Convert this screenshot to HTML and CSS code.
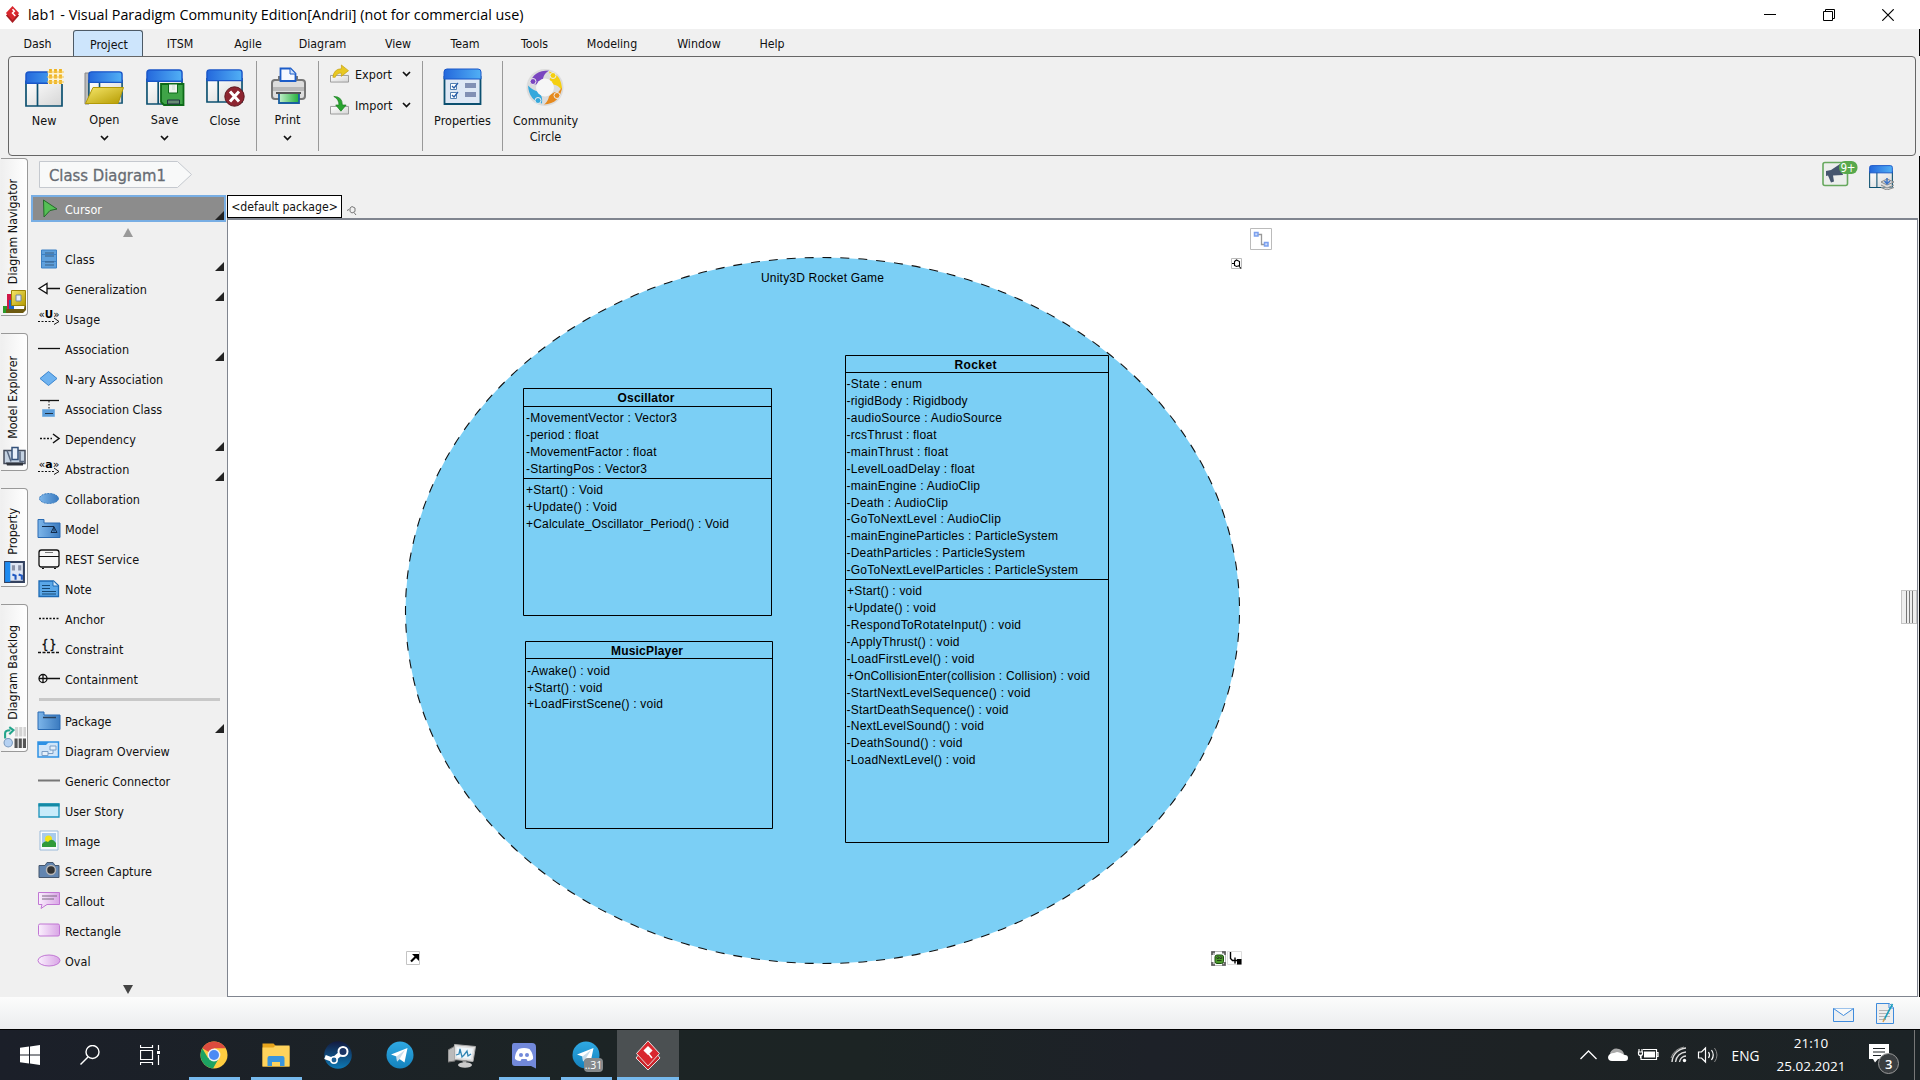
FILE: index.html
```html
<!DOCTYPE html>
<html lang="en">
<head>
<meta charset="utf-8">
<title>lab1 - Visual Paradigm Community Edition</title>
<link rel="stylesheet" href="styles.css">
</head>
<body>
<svg class="defs" width="0" height="0">
  <defs>
    <linearGradient id="gBlue" x1="0" y1="0" x2="1" y2="0"><stop offset="0" stop-color="#7db6ea"/><stop offset="1" stop-color="#3a7abf"/></linearGradient>
    <linearGradient id="gHead" x1="0" y1="0" x2="1" y2="0"><stop offset="0" stop-color="#2468dc"/><stop offset="1" stop-color="#51b0f5"/></linearGradient>
    <linearGradient id="gPane" x1="0" y1="0" x2="1" y2="1"><stop offset="0" stop-color="#fff"/><stop offset="1" stop-color="#d5d5d5"/></linearGradient>
    <linearGradient id="gGold" x1="0" y1="0" x2="1" y2="1"><stop offset="0" stop-color="#f6e76a"/><stop offset="1" stop-color="#b49a00"/></linearGradient>
    <linearGradient id="gGreen" x1="0" y1="0" x2="1" y2="0"><stop offset="0" stop-color="#c3efcb"/><stop offset="1" stop-color="#22b03a"/></linearGradient>
    <linearGradient id="gPink" x1="0" y1="0" x2="1" y2="0"><stop offset="0" stop-color="#faf0fd"/><stop offset="1" stop-color="#d9a5e6"/></linearGradient>
    <linearGradient id="gTele" x1="0" y1="0" x2="0" y2="1"><stop offset="0" stop-color="#2fa9e3"/><stop offset="1" stop-color="#1482bd"/></linearGradient>
    <linearGradient id="gSteam" x1="0" y1="0" x2="0" y2="1"><stop offset="0" stop-color="#131a3f"/><stop offset="1" stop-color="#0d79b5"/></linearGradient>
    <symbol id="window" viewBox="0 0 38 38" preserveAspectRatio="none">
      <path d="M1 11h36v26H1z" fill="url(#gPane)" stroke="#0c5070" stroke-width="1.700"/>
      <path d="M12.500 12v25" stroke="#0c5070" stroke-width="1.700"/>
      <path d="M1 13V4q0-3 3-3h30q3 0 3 3v9z" fill="url(#gHead)" stroke="#1a56c8" stroke-width="1.500"/>
    </symbol>
    <symbol id="down" viewBox="0 0 9 6"><path d="M1 1l3.500 3.500L8 1" fill="none" stroke="#111" stroke-width="1.700"/></symbol>
    <symbol id="tele" viewBox="0 0 28 28">
      <circle cx="14" cy="14" r="13.500" fill="url(#gTele)"/>
      <path d="M5 13.500L21.500 7 18.500 21.500 13.500 18l-2.500 2.500-.5-5z" fill="#fff"/><path d="M10.500 15.500L19 9l-5.500 9-2.500 2.500z" fill="#c8dcea"/>
    </symbol>
    <symbol id="corner" viewBox="0 0 9 9"><path d="M9 0v9H0z" fill="#222"/></symbol>
    <symbol id="pin" viewBox="0 0 11 11"><path d="M1 5.500l2-1M4 3l2-1.500 3 1.500v3.500l-3 1.500-2-1.500zM8 7.500l2 2.500" fill="none" stroke="currentColor" stroke-width="1"/></symbol>
  </defs>
</svg>

<div class="app">
  <header class="titlebar">
    <svg class="applogo" viewBox="0 0 16 18"><path d="M8 3l7 7-7 8-7-8z" fill="#a91d22"/><path d="M8 0l7 7.500L8 15 1 7.500z" fill="#d9272e"/><path d="M8 3.500l2 2-2 2 3 3" fill="none" stroke="#fff" stroke-width="1.600"/></svg>
    <span class="title">lab1 - Visual Paradigm Community Edition[Andrii] (not for commercial use)</span>
    <div class="winbtns">
      <svg viewBox="0 0 12 12"><path d="M0 5.500h12" stroke="#000"/></svg>
      <svg viewBox="0 0 12 12"><path d="M.5 2.500h9v9h-9zM2.500 2.500v-2h9v9h-2" fill="none" stroke="#000"/></svg>
      <svg viewBox="0 0 12 12"><path d="M.3.300l11.400 11.400M11.700.300L.3 11.700" stroke="#000" stroke-width="1.200"/></svg>
    </div>
  </header>

  <nav class="menu">
    <span class="m1">Dash</span><span class="m2 active">Project</span><span class="m3">ITSM</span><span class="m4">Agile</span><span class="m5">Diagram</span><span class="m6">View</span><span class="m7">Team</span><span class="m8">Tools</span><span class="m9">Modeling</span><span class="m10">Window</span><span class="m11">Help</span>
  </nav>

  <section class="ribbon">
    <div class="group files">
      <div class="tool plain">
        <svg viewBox="0 0 40 40"><use href="#window" x="1" y="4" width="38" height="36"/><path d="M24 3h15v14H24z" fill="#fdf3d2"/><path d="M26.500 2v16M31.500 2v16M36.500 2v16" stroke="#eeb21c" stroke-width="2.800" stroke-dasharray="4 1.500"/><path d="M23 5h17M23 10h17M23 15h17" stroke="#f3c552" stroke-width="1.200"/></svg>
        <span>New</span>
      </div>
      <div class="tool">
        <svg viewBox="0 0 40 40"><path d="M1 6h4v31H1z" fill="#bbb" stroke="#888"/><use href="#window" x="4" y="4" width="35" height="33"/><path d="M9 20.500h30.500L34 36.500H1.500z" fill="url(#gGold)" stroke="#b39a07"/></svg>
        <span>Open</span><svg class="dn"><use href="#down"/></svg>
      </div>
      <div class="tool">
        <svg viewBox="0 0 40 40"><use href="#window" x="1" y="2" width="37" height="36"/><path d="M16 17h22.500v21H19l-3-3z" fill="#3fa447" stroke="#0d6a18" stroke-width="1.800"/><path d="M23.500 17h9v9h-9z" fill="#eef5ee" stroke="#0d6a18"/><path d="M27 18h3v5h-3z" fill="#dce8dc"/><path d="M22.500 33h12v4h-12z" fill="#688a74" stroke="#234"/></svg>
        <span>Save</span><svg class="dn"><use href="#down"/></svg>
      </div>
      <div class="tool plain">
        <svg viewBox="0 0 40 40"><use href="#window" x="1" y="2" width="37" height="34"/><circle cx="29.500" cy="29.500" r="9.700" fill="#8d2430" stroke="#5d161e"/><path d="M25 24.500l9 10M34 24.500l-9 10" stroke="#fff" stroke-width="3"/></svg>
        <span>Close</span>
      </div>
    </div>
    <div class="group print">
      <div class="tool">
        <svg viewBox="0 0 40 40"><path d="M6 14h28v-2h-4v-3h-20v3H6z" fill="#777"/><rect x="4" y="13" width="33" height="19" rx="3" fill="#ddd" stroke="#777" stroke-width="2"/><path d="M12.500 14V1.500h10l5 5V14z" fill="#f5f9ff" stroke="#1c5cc8" stroke-width="1.800"/><path d="M22 1.500v5.500h5.500" fill="#cfe2fb" stroke="#1c5cc8"/><path d="M5 20h31v4H5z" fill="#b9b9b9"/><path d="M11 26h20v10H11z" fill="url(#gGreen)" stroke="#1a5fa0" stroke-width="1.800"/><path d="M8 26h25" stroke="#555" stroke-width="2"/></svg>
        <span>Print</span><svg class="dn"><use href="#down"/></svg>
      </div>
    </div>
    <div class="group port">
      <div class="line"><svg class="pi" viewBox="0 0 20 20"><path d="M.5 11.500h19v7H.5z" fill="url(#gPane)" stroke="#999"/><path d="M3 13.500Q4 4.500 12 4.500V.5l7.500 6-7.500 6V9Q7 9 5.500 13.500z" fill="#e8c822" stroke="#c29f10" stroke-width=".7"/></svg><span>Export</span><svg class="dn"><use href="#down"/></svg></div>
      <div class="line imp"><svg class="pi" viewBox="0 0 20 20"><path d="M.5 11.500h19v8H.5z" fill="url(#gPane)" stroke="#999"/><path d="M4 1Q13 1 13 10h4l-5.500 6.500L6 10h3.500Q9.500 4 4 1z" fill="#2aa630" stroke="#127818" stroke-width=".7"/></svg><span>Import</span><svg class="dn"><use href="#down"/></svg></div>
    </div>
    <div class="group props">
      <div class="tool plain">
        <svg viewBox="0 0 40 40"><path d="M1.500 10h36v27h-36z" fill="#dfe8f5" stroke="#0c5070" stroke-width="1.800"/><path d="M1 12V5q0-3 3-3h31q3 0 3 3v7z" fill="url(#gHead)" stroke="#1a56c8"/><path d="M7.500 16.500h6v6h-6zM7.500 25.500h6v6h-6z" fill="#fff" stroke="#5580b0"/><path d="M9 19l2 2 4-5M9 28l2 2 4-5" fill="none" stroke="#2a5ea8" stroke-width="1.300"/><path d="M22 16h11v5H22zM22 25h11v5H22z" fill="#8290b4"/></svg>
        <span>Properties</span>
      </div>
    </div>
    <div class="group comm">
      <div class="tool plain">
        <svg viewBox="0 0 40 40"><circle cx="19" cy="20.500" r="18.500" fill="#dcdcdc"/><g transform="translate(-1 .5)"><path d="M5 16Q8 3 24 3q-5 3-6 8-3 6-8 6z" fill="#7a45c0"/><path d="M24 4q13 3 13 19-4-6-9-6-5-4-2-8z" fill="#f5cf10"/><path d="M37 20q-2 16-18 17 4-3 5-8 5-6 9-4z" fill="#e68a1e"/><path d="M3 18q5 5 10 6 5 4 4 12Q4 33 3 18z" fill="#35a8dc"/><circle cx="20" cy="20" r="9" fill="#f6f6f6"/><g stroke="#eee"><circle cx="8" cy="14" r="3" fill="#7a45c0"/><circle cx="28" cy="8" r="3" fill="#f5cf10"/><circle cx="32" cy="28" r="3" fill="#e68a1e"/><circle cx="13" cy="33" r="3" fill="#35a8dc"/></g></g></svg>
        <span>Community<br>Circle</span>
      </div>
    </div>
  </section>

  <main class="work">
    <aside class="tabs">
      <div class="vtab t1"><span>Diagram Navigator</span><svg viewBox="0 0 23 23"><path d="M0 16h8v7H0z" fill="#2a9a2a"/><path d="M4 4h7v16H4z" fill="#d01848"/><path d="M6 10h5v11H6z" fill="#1b65c4"/><path d="M3 19h18l2-14v15l-3 3H3z" fill="#6d5a10"/><path d="M8.500.5h14v15h-14z" fill="url(#gGold)" stroke="#9b8306"/><path d="M13 5h5v6h-5z" fill="#e5edf6" stroke="#7688a0"/></svg></div>
      <div class="vtab t2"><span>Model Explorer</span><svg viewBox="0 0 23 20"><path d="M1 4h21v13H1z" fill="#c4d2e2" stroke="#454c5b" stroke-width="1.500"/><path d="M3 16h17v3H4z" fill="#30353e"/><path d="M9 1h6v12H9z" fill="#e8f0fa" stroke="#34517a" stroke-width="1.500"/><path d="M4 4l4 11M17 5v10h4" stroke="#596880" stroke-width="1.500" fill="none"/></svg></div>
      <div class="vtab t3"><span>Property</span><svg viewBox="0 0 20 22"><path d="M1 1h18v19H1z" fill="#dfe6f4" stroke="#33415f" stroke-width="2"/><path d="M1 1h5v19H1z" fill="#1e8bf0"/><path d="M9 4v5M15 4v5" stroke="#8b93a8" stroke-width="3"/><path d="M8 13l3 1v4M14 13l3 1v4" stroke="#1f57c0" stroke-width="2" fill="none"/></svg></div>
      <div class="vtab t4"><span>Diagram Backlog</span><svg viewBox="0 0 22 22"><path d="M2 12V7q0-3 5-3M6 1l4 3-4 4" fill="none" stroke="#23a58c" stroke-width="2"/><circle cx="5" cy="16" r="4" fill="#b5d1f2" stroke="#7797bc"/><path d="M13 1v9M17 1v9M21 1v9" stroke="#d3d3d3" stroke-width="3"/><path d="M12.500 12v9M16.500 12v9M20.500 12v9" stroke="#555" stroke-width="3"/></svg></div>
    </aside>

    <div class="center">
      <div class="crumbbar">
        <svg class="crumb" viewBox="0 0 154 27"><path d="M.5.500h138L152.500 13.500 138.500 26.500H.5z" fill="#f8f9f9" stroke="#c5c9cf"/></svg>
        <span class="crumbtext">Class Diagram1</span>
        <svg class="mega" viewBox="0 0 36 26"><rect x="1" y="1.500" width="24.500" height="23" rx="2" fill="#eceeec" stroke="#67a85e" stroke-width="1.600"/><path d="M4 10l5-1 9-6 3 11-10 .5 1 6-3 1-3-7-2 .5z" fill="#46566e"/><rect x="17" y="0" width="18.500" height="13" rx="6" fill="#58a94c"/><text x="18.500" y="10.500" font-size="11.500" fill="#fff" textLength="15">9+</text></svg>
        <svg class="layout" viewBox="0 0 26 25"><use href="#window" x="0" y="0" width="24" height="23"/><path d="M12 17l6-3 7 3-7 3zM12 20l6 3 7-3M12 22.500l6 2.500 7-2.500" fill="#ddd" stroke="#8a8a8a"/><path d="M18 13v5M15.500 16l2.500 3 3-3" stroke="#3d73c8" stroke-width="1.500" fill="none"/></svg>
      </div>
      <div class="body">
        <div class="palette">
          <div class="row cursor"><svg viewBox="0 0 24 24"><path d="M6.500 3l13.500 9-7 1.500-6 6.500z" fill="#55bf55" stroke="#246b2a"/></svg><span>Cursor</span><svg class="more"><use href="#corner"/></svg></div>
          <div class="arrow up"></div>
          <div class="row"><svg viewBox="0 0 24 24"><path d="M4.500 3h15v18h-15z" fill="#5fa0dc" stroke="#3c80c4"/><path d="M5 7.500h14M5 14.500h14" stroke="#3c80c4"/><path d="M8 6h9M8 9h9M8 15h9M8 18h9" stroke="#3b5f83"/></svg><span>Class</span><svg class="more"><use href="#corner"/></svg></div>
          <div class="row"><svg viewBox="0 0 24 24"><path d="M2 11.500l8-5v10zM10 11.500h13" fill="#fff" stroke="#111" stroke-width="1.300"/></svg><span>Generalization</span><svg class="more"><use href="#corner"/></svg></div>
          <div class="row"><svg viewBox="0 0 24 24"><text x="1.500" y="11" font-size="11" textLength="21" lengthAdjust="spacingAndGlyphs">«<tspan font-weight="bold">U</tspan>»</text><path d="M1 14.500h17" stroke="#111" stroke-dasharray="2 1.500"/><path d="M17 11l5 3.500-5 3" fill="none" stroke="#111"/></svg><span>Usage</span></div>
          <div class="row"><svg viewBox="0 0 24 24"><path d="M1 11.500h22" stroke="#111" stroke-width="1.300"/></svg><span>Association</span><svg class="more"><use href="#corner"/></svg></div>
          <div class="row"><svg viewBox="0 0 24 24"><path d="M3 11.500l8.500-7 8.500 7-8.500 7z" fill="#6fb3f0" stroke="#3a85cf"/></svg><span>N-ary Association</span></div>
          <div class="row"><svg viewBox="0 0 24 24"><path d="M3 3.500h19" stroke="#111" stroke-width="1.300"/><path d="M12 4v8" stroke="#111" stroke-dasharray="1.500 1.500"/><path d="M5.500 12.500h12v7h-12z" fill="#5b9edc" stroke="#7eb2e0"/><path d="M8 16.500h8" stroke="#234"/></svg><span>Association Class</span></div>
          <div class="row"><svg viewBox="0 0 24 24"><path d="M3 11.500h12" stroke="#111" stroke-width="1.300" stroke-dasharray="2 1.500"/><path d="M16 7l6 4.500-6 4.500" fill="none" stroke="#111" stroke-width="1.500"/></svg><span>Dependency</span><svg class="more"><use href="#corner"/></svg></div>
          <div class="row"><svg viewBox="0 0 24 24"><text x="1.500" y="11" font-size="11" textLength="21" lengthAdjust="spacingAndGlyphs">«<tspan font-weight="bold">a</tspan>»</text><path d="M1 14.500h17" stroke="#111" stroke-dasharray="2 1.500"/><path d="M17 11l5 3.500-5 3" fill="none" stroke="#111"/></svg><span>Abstraction</span><svg class="more"><use href="#corner"/></svg></div>
          <div class="row"><svg viewBox="0 0 24 24"><ellipse cx="12" cy="11.500" rx="9.500" ry="5" fill="url(#gBlue)" stroke="#2e74bb" stroke-dasharray="2 1"/></svg><span>Collaboration</span></div>
          <div class="row"><svg viewBox="0 0 24 24"><path d="M1 6V2.500h6V6h16v14.500H1z" fill="url(#gBlue)" stroke="#2a6bb3"/><path d="M5 9.500h12v5M14 15.500l3-5.500 3 5.500z" fill="none" stroke="#112b4b"/></svg><span>Model</span></div>
          <div class="row"><svg viewBox="0 0 24 24"><rect x="2" y="3" width="20" height="17" rx="2.500" fill="#f6f6f6" stroke="#111" stroke-width="1.300"/><path d="M2 9.500h20M5 21.500h2M17 21.500h2" stroke="#111"/><path d="M8 5.500h8" stroke="#777"/></svg><span>REST Service</span></div>
          <div class="row"><svg viewBox="0 0 24 24"><path d="M2 4h14.500l5 4.500V19.500H2z" fill="#5aa7e8" stroke="#1d6ab4" stroke-width="1.300"/><path d="M5 8.500h8M5 11.500h8M5 14.500h14M5 17h14" stroke="#174872"/><path d="M16 4v5h5" fill="#d6eafb" stroke="#1d6ab4"/></svg><span>Note</span></div>
          <div class="row"><svg viewBox="0 0 24 24"><path d="M2 11.500h21" stroke="#111" stroke-width="1.300" stroke-dasharray="2 1.500"/></svg><span>Anchor</span></div>
          <div class="row"><svg viewBox="0 0 24 24"><text x="4.500" y="12" font-size="12" stroke="#111" stroke-width=".4">{</text><text x="12.500" y="12" font-size="12" stroke="#111" stroke-width=".4">}</text><path d="M1 15.500h22" stroke="#111" stroke-width="1.300" stroke-dasharray="3 1.500"/></svg><span>Constraint</span></div>
          <div class="row"><svg viewBox="0 0 24 24"><circle cx="6" cy="11.500" r="4" fill="#fff" stroke="#111" stroke-width="1.300"/><path d="M2 11.500h21M6 7.500v8" stroke="#111" stroke-width="1.300"/></svg><span>Containment</span></div>
          <div class="rule"></div>
          <div class="row"><svg viewBox="0 0 24 24"><path d="M1 6V3h6v3h16v14.500H1z" fill="url(#gBlue)" stroke="#2a6bb3"/><path d="M6 8.500h13" stroke="#2a415c" stroke-width="1.500"/></svg><span>Package</span><svg class="more"><use href="#corner"/></svg></div>
          <div class="row"><svg viewBox="0 0 24 24"><path d="M1 3h20.500v15H1z" fill="#d0e5f9" stroke="#2e91e4" stroke-width="1.500"/><path d="M1 3h11l-3 3H1z" fill="#2e91e4"/><path d="M5 12.500h6v4H5zM13 7h6v4h-6zM11 14.500h5V11" fill="#e7f0fa" stroke="#7b9dc4"/></svg><span>Diagram Overview</span></div>
          <div class="row"><svg viewBox="0 0 24 24"><path d="M1 11.500h22" stroke="#777" stroke-width="2"/></svg><span>Generic Connector</span></div>
          <div class="row"><svg viewBox="0 0 24 24"><path d="M2 5h20v13H2z" fill="#c8ebfa" stroke="#1b92bb" stroke-width="1.300"/><path d="M1.500 4.500h21v3h-21z" fill="#138aa5"/></svg><span>User Story</span></div>
          <div class="row"><svg viewBox="0 0 24 24"><path d="M3 2h18v19H3z" fill="#f8fafc" stroke="#9abada"/><path d="M5 4h14v14H5z" fill="#a8cbec"/><circle cx="11.500" cy="10" r="3.500" fill="#f4e515"/><path d="M5 18v-3q3-4 6-2 4-5 8 1v4z" fill="#2f9a3a"/></svg><span>Image</span></div>
          <div class="row"><svg viewBox="0 0 24 24"><path d="M2 6.500h6l2-3h6l2 3h4v12H2z" fill="#6285b0" stroke="#45566c"/><circle cx="14" cy="11" r="4.500" fill="#333" stroke="#b6b6b6" stroke-width="1.500"/></svg><span>Screen Capture</span></div>
          <div class="row"><svg viewBox="0 0 24 24"><path d="M1.500 3.500h21v12H10l-6 4 1-4H1.500z" fill="url(#gPink)" stroke="#c177d4"/><path d="M5 7h15M5 10h12" stroke="#7a6880"/></svg><span>Callout</span></div>
          <div class="row"><svg viewBox="0 0 24 24"><rect x="1.500" y="5" width="21" height="12" rx="1.500" fill="url(#gPink)" stroke="#c177d4"/></svg><span>Rectangle</span></div>
          <div class="row"><svg viewBox="0 0 24 24"><ellipse cx="12" cy="11.500" rx="11" ry="5.500" fill="url(#gPink)" stroke="#c177d4"/></svg><span>Oval</span></div>
          <div class="arrow dwn"></div>
        </div>
        <div class="editor">
          <div class="pkgbar"><span>&lt;default package&gt;</span><svg class="pinico"><use href="#pin"/></svg></div>
          <div class="canvas">
            <svg class="diagram" viewBox="228 220 1689 767">
              <ellipse cx="822.500" cy="610.500" rx="417" ry="353" fill="#7bcff5"/>
              <path d="M405.500 610.500A417 353 0 0 1 1239.500 610.500A417 353 0 0 1 405.500 610.500" pathLength="2430" fill="none" stroke="#111" stroke-width="1.100" stroke-dasharray="9 9" stroke-dashoffset="4.500"/>
              <text x="761" y="282" textLength="123">Unity3D Rocket Game</text>
              <g class="box">
                <path d="M523.500 388.500h248v227h-248zM523.500 406.500h248M523.500 478.500h248"/>
                <path d="M525.500 641.500h247v187h-247zM525.500 658.500h247"/>
                <path d="M845.500 355.500h263v487h-263zM845.500 372.500h263M845.500 579.500h263"/>
              </g>
              <g class="name">
                <text x="617.500" y="402" textLength="57">Oscillator</text>
                <text x="611" y="655" textLength="72">MusicPlayer</text>
                <text x="954.500" y="369" textLength="42">Rocket</text>
              </g>
              <text x="526" y="422" textLength="151">-MovementVector : Vector3</text>
              <text x="526" y="439" textLength="72.500">-period : float</text>
              <text x="526" y="456" textLength="130.500">-MovementFactor : float</text>
              <text x="526" y="473" textLength="121">-StartingPos : Vector3</text>
              <text x="526" y="494" textLength="77">+Start() : Void</text>
              <text x="526" y="511" textLength="91">+Update() : Void</text>
              <text x="526" y="528" textLength="203">+Calculate_Oscillator_Period() : Void</text>
              <text x="527" y="675" textLength="83">-Awake() : void</text>
              <text x="527" y="692" textLength="75.500">+Start() : void</text>
              <text x="527" y="708" textLength="136">+LoadFirstScene() : void</text>
              <text x="846.500" y="388" textLength="75.500">-State : enum</text>
              <text x="846.500" y="405" textLength="121">-rigidBody : Rigidbody</text>
              <text x="846.500" y="422" textLength="155.500">-audioSource : AudioSource</text>
              <text x="846.500" y="439" textLength="90">-rcsThrust : float</text>
              <text x="846.500" y="456" textLength="101.500">-mainThrust : float</text>
              <text x="846.500" y="473" textLength="128">-LevelLoadDelay : float</text>
              <text x="846.500" y="490" textLength="133.500">-mainEngine : AudioClip</text>
              <text x="846.500" y="507" textLength="101.500">-Death : AudioClip</text>
              <text x="846.500" y="523" textLength="154.500">-GoToNextLevel : AudioClip</text>
              <text x="846.500" y="540" textLength="211.500">-mainEngineParticles : ParticleSystem</text>
              <text x="846.500" y="557" textLength="178.500">-DeathParticles : ParticleSystem</text>
              <text x="846.500" y="574" textLength="231.500">-GoToNextLevelParticles : ParticleSystem</text>
              <text x="847" y="595" textLength="75">+Start() : void</text>
              <text x="847" y="612" textLength="89">+Update() : void</text>
              <text x="846.500" y="629" textLength="174.500">-RespondToRotateInput() : void</text>
              <text x="846.500" y="646" textLength="113">-ApplyThrust() : void</text>
              <text x="846.500" y="663" textLength="128">-LoadFirstLevel() : void</text>
              <text x="847" y="680" textLength="243">+OnCollisionEnter(collision : Collision) : void</text>
              <text x="846.500" y="697" textLength="184">-StartNextLevelSequence() : void</text>
              <text x="846.500" y="714" textLength="162">-StartDeathSequence() : void</text>
              <text x="846.500" y="730" textLength="137.500">-NextLevelSound() : void</text>
              <text x="846.500" y="747" textLength="116">-DeathSound() : void</text>
              <text x="846.500" y="764" textLength="129">-LoadNextLevel() : void</text>
              <g transform="translate(1250 228)"><path d="M.5.500h21v21H.5z" fill="#fff" stroke="#bbb"/><path d="M8 6.500h3.500v10H15" fill="none" stroke="#999" stroke-width="1.300"/><path d="M4.500 4.500h3.500v3.500H4.500zM14.500 14.500h3.500v3.500h-3.500z" fill="#cfdcf8" stroke="#7ba0ee" stroke-width="1.500"/></g>
              <g transform="translate(1231 258)"><path d="M.5.500h10v10H.5z" fill="#fff" stroke="#bbb"/><path d="M1 5.500h2M3.500 3.500l2-1.500 3 1.500v4l-3 1-2-1zM7.500 7.500L10 10.500" fill="none" stroke="#000" stroke-width="1.100"/></g>
              <g transform="translate(406 951)"><path d="M.5.500h13v13H.5z" fill="#fff" stroke="#c4c4c4"/><path d="M5 10.500l5-5" stroke="#000" stroke-width="2.200"/><path d="M6 3h7v7z" fill="#000"/></g>
              <g transform="translate(1211 951)"><path d="M0 0h15v15H0z" fill="#bbb"/><path d="M4 1h7v2h3v8h-3v3H4v-3H1V4h3z" fill="#fff"/><path d="M1 4V1h3M11 1h3v3M14 11v3h-3M4 14H1v-3" fill="none" stroke="#555" stroke-width="1.500"/><rect x="4" y="4" width="8.500" height="8.500" rx="2" fill="#4e9c2e" stroke="#1c4d10"/><path d="M6 6h1.700v1.500H6zM9 6h1.700v1.500H9zM6 9.500h4.500" fill="#cde8b8" stroke="#112b08" stroke-width=".8"/></g>
              <g transform="translate(1227 951)"><path d="M.5.500h14v13H.5z" fill="#fff" stroke="#ddd"/><path d="M3.500 1v6.500l2 2H10M8 6.500v6" fill="none" stroke="#000" stroke-width="1.400"/><path d="M10 8h4.500v5.500H10z" fill="#000"/></g>
            </svg>
            <div class="grip"></div>
          </div>
        </div>
      </div>
    </div>
  </main>

  <footer class="status">
    <svg class="mail" viewBox="0 0 21 14"><path d="M.5.500h20v13H.5z" fill="#eceff2" stroke="#3f8bdc"/><path d="M.5.500l10 7 10-7" fill="#fafafa" stroke="#3f8bdc"/></svg>
    <svg class="doc" viewBox="0 0 18 22"><path d="M.5 1.500h13l4 4v16H.5z" fill="#eee" stroke="#3f8bdc"/><path d="M13 1.500v4.500h4.500" fill="#fff" stroke="#3f8bdc"/><path d="M3 8.500h11M3 11.500h11M3 14.500h11M3 17.500h7" stroke="#b5b5b5"/><path d="M16.500 2L8 18" stroke="#1c9dbb" stroke-width="1.600"/><path d="M8.500 16.500L7 20" stroke="#d9a050" stroke-width="1.500"/></svg>
  </footer>

  <div class="taskbar">
    <div class="sys"><svg viewBox="0 0 20 20"><path d="M0 2.800L9 1.500V9.500H0zM10 1.400L20 0V9.500H10zM0 10.500H9v8L0 17.200zM10 10.500H20V20l-10-1.400z" fill="#fff"/></svg></div>
    <div class="sys"><svg viewBox="0 0 20 20"><circle cx="12.500" cy="7" r="6.500" fill="none" stroke="#fff" stroke-width="1.400"/><path d="M8 12L.5 19.500" stroke="#fff" stroke-width="1.400"/></svg></div>
    <div class="sys"><svg viewBox="0 0 20 20"><path d="M.5 0v2.500h12V0M.5 5.500h12v9H.5zM.5 20v-2.500h12V20M18.500 0v5M18.500 10v10" fill="none" stroke="#fff" stroke-width="1.200"/><path d="M17 6h3v3h-3z" fill="#fff"/></svg></div>
    <div class="apps">
      <div class="task run"><svg viewBox="0 0 28 28"><circle cx="14" cy="14" r="13.500" fill="#ffcd40"/><path d="M14 14L2.300 7.300A13.500 13.500 0 0 1 25.700 7.300H14z" fill="#dd4b3e"/><path d="M2.300 7.300A13.500 13.500 0 0 0 13 27.500L19 17 14 14 8 17z" fill="#1da362"/><circle cx="14" cy="14" r="6.400" fill="#f1f1f1"/><circle cx="14" cy="14" r="5" fill="#4b8af4"/></svg></div>
      <div class="task run"><svg viewBox="0 0 28 28"><path d="M.5 2.500h11l3 3h13v20H.5z" fill="#e8a51c"/><path d="M.5 6.500h11l2-2h14v21H.5z" fill="#ffd35c"/><path d="M5.500 25V17q0-2 2-2h13q2 0 2 2v8h-4.500v-4h-8v4z" fill="#3a95dd"/></svg></div>
      <div class="task"><svg viewBox="0 0 28 28"><circle cx="14" cy="14" r="13.800" fill="url(#gSteam)"/><path d="M1 16l8 3 7-6" stroke="#fff" stroke-width="4.500" fill="none"/><circle cx="10" cy="19" r="3.200" fill="#1d5f94" stroke="#fff" stroke-width="1.500"/><circle cx="19" cy="10.500" r="4.500" fill="#1c3565" stroke="#fff" stroke-width="2"/></svg></div>
      <div class="task"><svg viewBox="0 0 28 28"><use href="#tele"/></svg></div>
      <div class="task"><svg viewBox="0 0 28 28"><path d="M0 9l7-4v15l-7 1z" fill="#bbb" stroke="#777"/><path d="M6.500 3.500l21 2-2.500 15-18.500-2z" fill="#e0e0e0" stroke="#aaa"/><path d="M8.500 6l16.500 1.500-2 10.500-14.500-1.500z" fill="#eef6fb"/><path d="M8 14l3-1 1-5 2 8 2-2 3-4 1 5 3-2" stroke="#3286b4" fill="none" stroke-width="1.300"/><path d="M14 19h5l-1 3h-3z" fill="#999"/><ellipse cx="17" cy="24" rx="7" ry="2.800" fill="#ccc"/></svg></div>
      <div class="task run"><svg viewBox="0 0 28 28"><path d="M4 2h18q4 0 4 4v21.500L21 25H5q-3 0-3-3V5q0-3 2-3z" fill="#7289da"/><path d="M8.500 8Q14 6 19.500 8q4 5 3.500 10-3 2.500-5.500 2l-1-2h-5l-1 2Q7.500 20.500 5 18 4.500 13 8.500 8z" fill="#fff"/><circle cx="11" cy="14" r="2" fill="#7289da"/><circle cx="17" cy="14" r="2" fill="#7289da"/></svg></div>
      <div class="task run"><svg viewBox="0 0 28 28"><use href="#tele"/></svg><span class="count">..31</span></div>
      <div class="task run current"><svg viewBox="0 0 28 30"><path d="M14 3L26 18 14 30 2 18z" fill="#c9252b" stroke="#e8dede"/><path d="M14 .8l11.500 12.700L14 26 2.500 13.500z" fill="#d9272e" stroke="#e8dede"/><path d="M14 7l3.500 3.500L14 14l-3.500-3.500zM14 13l4 5" fill="#fff" stroke="#fff" stroke-width="1.500"/></svg></div>
    </div>
    <div class="tray">
      <svg viewBox="0 0 30 30"><path d="M7.500 19l8-8 8 8" fill="none" stroke="#fff" stroke-width="1.300"/></svg>
      <svg viewBox="0 0 30 30"><path d="M7 13q3-6 9-4 4 1 5 5l-9 7z" fill="#aaa"/><path d="M9 21q-4 0-4-4 1-4 6-4l3-1q2 0 8 3 3 0 3 3t-3 3z" fill="#fff"/></svg>
      <svg viewBox="0 0 30 30"><path d="M10 9.500h13.500v10H8v-5M23.500 12.500h1.500v4h-1.500M5.500 12v1.500q0 2 2 2t2-2V12zM6 9v3M9 9v3M7.500 15v3" fill="none" stroke="#fff" stroke-width="1.200"/><path d="M11 11.500h11v6H11z" fill="#fff"/></svg>
      <svg viewBox="0 0 30 30"><path d="M9 22A15 15 0 0 1 23 8M12.500 22A11 11 0 0 1 23 12M16.500 22A7 7 0 0 1 23 16" fill="none" stroke="#ddd" stroke-width="1.400"/><path d="M8 18Q11 9 21 7" fill="none" stroke="#999"/><circle cx="21.500" cy="20.500" r="1.700" fill="#fff"/></svg>
      <svg viewBox="0 0 30 30"><path d="M5.500 12h3l4-4v14l-4-4h-3zM15.500 12q2 3 0 6M18.500 10q3.500 5 0 10" fill="none" stroke="#fff" stroke-width="1.200"/><path d="M21.500 8q5 7 0 14" fill="none" stroke="#888"/></svg>
      <span class="lang">ENG</span>
      <span class="clock">21:10<br>25.02.2021</span>
      <svg class="note" viewBox="0 0 32 32"><path d="M1 1h20v15H10l-3 3.500-2-3.500H1z" fill="#fff"/><path d="M5 5.500h12M5 9h12M5 12.500h8" stroke="#1d2226" stroke-width="1.200"/><circle cx="20.500" cy="20.500" r="10" fill="#3a3e41" stroke="#999"/><text x="17" y="25.500" font-size="13" font-weight="600" fill="#fff">3</text></svg>
      <i class="peek"></i>
    </div>
  </div>
</div>
</body>
</html>
```
FILE: styles.css
```css
* { box-sizing: border-box; }
body { margin: 0; background: #f0f0f0; font-family: "DejaVu Sans Condensed", "DejaVu Sans", sans-serif; font-size: 12.5px; color: #111; overflow: hidden; }
svg { display: block; flex: none; }
.defs { position: absolute; }
.app { width: 1920px; height: 1080px; display: grid; grid-template-rows: 29px 27px 100px 841px 33px 50px; }

.titlebar { background: #fff; display: flex; align-items: center; padding-left: 5px; }
.applogo { width: 15px; height: 17px; margin-right: 8px; }
.title { font-family: "Open Sans", sans-serif; font-size: 14.350px; color: #000; white-space: nowrap; }
.winbtns { margin-left: auto; display: flex; gap: 47px; padding-right: 26px; }
.winbtns svg { width: 12px; height: 12px; }

.menu { display: flex; padding-left: 2px; font-size: 12.300px; border-right: 1px solid #000; }
.menu span { height: 26px; line-height: 29px; margin-top: 1px; text-align: center; }
.menu .active { background: #cde5fc; border: 1px solid #4d5a66; border-bottom: 0; border-radius: 3px 3px 0 0; line-height: 28px; padding-left: 2px; }
.m1 { width: 71px; } .m2 { width: 70px; } .m3 { width: 74px; } .m4 { width: 62px; } .m5 { width: 87px; } .m6 { width: 64px; }
.m7 { width: 70px; } .m8 { width: 69px; } .m9 { width: 86px; } .m10 { width: 88px; } .m11 { width: 58px; }

.ribbon { display: flex; margin: 0 4px 0 8px; padding: 4px 0 3px; border: 1px solid #666; border-radius: 4px; }
.group { display: flex; padding-top: 6px; height: 90px; }
.group:not(:last-child) { border-right: 1px solid #999; }
.files { width: 248px; padding: 6px 1px 0 5px; }
.print { width: 62px; }
.port { width: 104px; flex-direction: column; padding: 3px 0 0 11px; }
.props { width: 80px; }
.comm { width: 85px; }
.tool { flex: 1; display: flex; flex-direction: column; align-items: center; line-height: 16px; text-align: center; }
.tool > svg:first-child { width: 40px; height: 40px; margin-bottom: 5px; }
.plain > svg:first-child { margin-bottom: 6px; }
.dn { width: 9px; height: 6px; }
.tool .dn { margin-top: 7px; }
.line { display: flex; align-items: center; height: 20px; }
.line.imp { margin-top: 11px; }
.line .pi { width: 19px; height: 20px; margin-right: 6px; }
.line span { width: 47px; }

.work { display: grid; grid-template-columns: 31px 1fr; border-right: 1px solid #000; }
.tabs { display: flex; flex-direction: column; gap: 17px; padding: 2px 3px 0 1px; }
.vtab { width: 27px; background: linear-gradient(90deg, #efefef, #fff); border: 1px solid #999; border-left: 0; border-radius: 0 4px 4px 0; display: flex; flex-direction: column; justify-content: flex-end; align-items: center; gap: 6px; padding-bottom: 2px; }
.vtab span { writing-mode: vertical-rl; transform: rotate(180deg); line-height: 18px; font-size: 12.300px; margin-right: 3px; }
.vtab svg { width: 23px; height: 23px; }
.t1 { height: 158px; }
.t2 { height: 138px; }
.t3 { height: 99px; }
.t4 { height: 148px; }

.center { display: flex; flex-direction: column; }
.crumbbar { height: 39px; display: flex; padding: 5px 24px 0 8px; }
.crumb { width: 154px; height: 27px; }
.crumbtext { width: 120px; margin-left: -144px; font-size: 16.500px; line-height: 29px; color: #666b72; -webkit-text-stroke: .3px #666b72; white-space: nowrap; position: relative; }
.mega { width: 36px; height: 26px; margin-left: auto; margin-right: 11px; }
.layout { width: 26px; height: 25px; margin-top: 4px; }

.body { display: flex; height: 802px; }
.palette { width: 196px; }
.row { height: 30px; display: flex; align-items: center; padding: 0 3px 0 6px; }
.row > svg:first-child { width: 24px; height: 24px; margin-right: 4px; }
.row span { flex: 1; white-space: nowrap; }
.row .more { width: 9px; height: 9px; margin-top: 15px; }
.cursor { height: 27px; width: 195px; background: #8c8c8c; border: 2px solid #78aee4; color: #fff; padding: 0 0 0 4px; }
.cursor span { padding-top: 1px; }
.cursor .more { margin-top: 14px; }
.arrow { width: 0; margin-left: 92px; border: 5.500px solid transparent; }
.up { border-top: 0; border-bottom: 9px solid #999; margin-top: 6px; margin-bottom: 7px; }
.dwn { border-bottom: 0; border-top: 9px solid #444; margin-top: 9px; }
.rule { height: 3px; background: #c8c8c8; margin: 4px 7px 5px 8px; }

.editor { flex: 1; display: flex; flex-direction: column; }
.pkgbar { height: 23px; display: flex; }
.pkgbar span { border: 1px solid #000; background: #fff; width: 115px; text-align: center; font-size: 12.200px; line-height: 22px; white-space: nowrap; }
.pinico { width: 11px; height: 11px; margin: 10px 0 0 4px; color: #777; }
.canvas { height: 779px; margin-right: 1px; background: #fff; border: 1px solid #80858f; border-top-width: 2px; display: grid; }
.canvas > * { grid-area: 1 / 1; }
.diagram { width: 1689px; height: 767px; font-family: "Liberation Sans", Arial, sans-serif; font-size: 12px; }
.box { fill: none; stroke: #000; }
.name { font-weight: bold; }
.grip { justify-self: end; align-self: start; margin-top: 370px; width: 16px; height: 34px; border: 1px solid #c4c4c4; background: linear-gradient(90deg, #eee 4px, #777 4px 5px, #eee 5px 7px, #777 7px 8px, #eee 8px 10px, #777 10px 11px, #eee 11px); }

.status { background: linear-gradient(#fcfcfc, #ebecee); border-bottom: 1px solid #000; display: flex; padding: 0 26px 0 0; justify-content: flex-end; gap: 22px; }
.mail { width: 21px; height: 14px; margin-top: 11px; }
.doc { width: 18px; height: 22px; margin-top: 5px; }

.taskbar { background: linear-gradient(90deg, #1b1f29, #1c2425 30%, #1c2424 45%, #1d2128 60%, #1d2224 80%, #1c2326); display: flex; color: #fff; font-family: "Open Sans", sans-serif; }
.sys { width: 60px; display: grid; place-items: center; }
.sys svg { width: 20px; height: 20px; }
.apps { display: flex; margin-left: 3px; }
.task { width: 62px; display: flex; flex-direction: column; align-items: center; padding-top: 11px; position: relative; }
.task svg { width: 28px; height: 28px; }
.run::after { content: ""; width: 51px; height: 3px; background: #76b9ed; margin-top: auto; }
.current { background: #4b5052; }
.current::after { width: 62px; }
.current svg { height: 30px; margin-top: -1px; }
.count { position: absolute; left: 29px; top: 28px; width: 19px; height: 14px; border-radius: 4px; background: #85898b; font-size: 10.500px; line-height: 14px; text-align: center; }
.tray { margin-left: auto; display: flex; align-items: center; }
.tray svg { width: 30px; height: 30px; }
.lang { width: 45px; text-align: center; font-size: 13.700px; }
.clock { width: 86px; text-align: center; font-size: 13.500px; line-height: 23px; }
.tray .note { width: 32px; height: 32px; margin: 7px 14px 0 14px; }
.peek { width: 1px; height: 50px; background: #777; margin-right: 5px; }
```
